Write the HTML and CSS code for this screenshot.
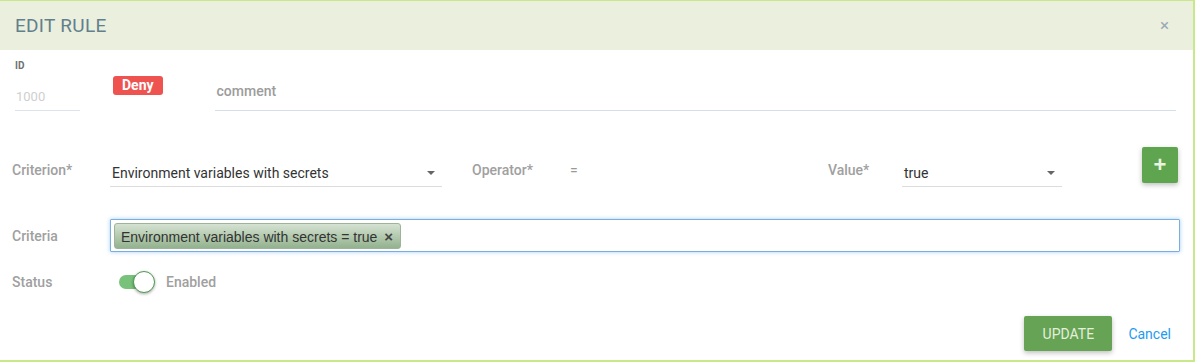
FILE: index.html
```html
<!DOCTYPE html>
<html lang="en">
<head>
    <meta charset="UTF-8">
    <title>Edit Rule</title>
    <link rel="stylesheet" href="styles.css">
</head>
<body>
    <div class="modal">
        <header class="modal-header">
            <h1>EDIT RULE</h1>
            <span class="close">&times;</span>
        </header>

        <div class="modal-body">
            <div class="row-top">
                <div class="id-field">
                    <label>ID</label>
                    <div class="id-input">1000</div>
                </div>
                <span class="badge-deny">Deny</span>
                <div class="comment-input">comment</div>
            </div>

            <div class="row-criterion">
                <label class="field-label">Criterion*</label>
                <div class="select select-criterion">
                    <span>Environment variables with secrets</span>
                    <span class="caret"></span>
                </div>
                <label class="field-label op-label">Operator*</label>
                <span class="op-value">=</span>
                <label class="field-label value-label">Value*</label>
                <div class="select select-value">
                    <span>true</span>
                    <span class="caret"></span>
                </div>
                <button class="btn-add">+</button>
            </div>

            <div class="row-criteria">
                <label class="field-label">Criteria</label>
                <div class="tags-input">
                    <span class="tag">Environment variables with secrets = true <b>&times;</b></span>
                </div>
            </div>

            <div class="row-status">
                <label class="field-label">Status</label>
                <span class="toggle"><span class="knob"></span></span>
                <span class="toggle-text">Enabled</span>
            </div>

            <div class="row-footer">
                <button class="btn-update">UPDATE</button>
                <a href="#" class="cancel">Cancel</a>
            </div>
        </div>
    </div>
</body>
</html>
```

FILE: styles.css
```css
body {
    margin: 0;
    font-family: 'Roboto', 'Liberation Sans', sans-serif;
    background: #fff;
}

.modal {
    width: 1195px;
    height: 362px;
    box-sizing: border-box;
    border: 2px solid #c8e88a;
    border-left: none;
    border-top-width: 1px;
    background: #fff;
}

.modal-header {
    height: 49px;
    background: #ebefde;
    display: flex;
    align-items: center;
    justify-content: space-between;
    padding: 0 24px 0 15px;
}

.modal-header h1 {
    margin: 0;
    font-size: 19px;
    font-weight: 400;
    color: #62808c;
    letter-spacing: 0.3px;
}

.close {
    color: #9aa8b8;
    font-size: 17px;
    line-height: 1;
}

.modal-body {
    padding: 0 12px 0 12px;
}

.row-top {
    display: flex;
    align-items: flex-start;
    height: 66px;
}

.id-field {
    margin-left: 3px;
    width: 65px;
    padding-top: 10px;
}

.id-field label {
    display: block;
    font-size: 10px;
    font-weight: 700;
    color: #707070;
    height: 14px;
}

.id-input {
    margin-top: 10px;
    font-size: 13px;
    color: #cfcfcf;
    padding: 5px 1px 6px;
    border-bottom: 1px solid #dde3ea;
}

.badge-deny {
    margin-left: 33px;
    margin-top: 26px;
    background: #ef5350;
    color: #fff;
    font-weight: 700;
    font-size: 14px;
    line-height: 19px;
    padding: 0 9px;
    border-radius: 3px;
}

.comment-input {
    margin-left: 52px;
    margin-top: 33px;
    flex: 1;
    margin-right: 5px;
    font-size: 14px;
    font-weight: 500;
    color: #9c9c9c;
    padding: 0 2px 11px;
    border-bottom: 1px solid #d6dfe9;
}

.row-criterion {
    display: flex;
    align-items: flex-start;
    margin-top: 31px;
    height: 40px;
}

.field-label {
    width: 98px;
    flex-shrink: 0;
    font-size: 14px;
    font-weight: 500;
    color: #a0a0a0;
    padding-top: 15px;
    line-height: 16px;
}

.select {
    margin-top: 10px;
    border-bottom: 1px solid #dcdcdc;
    display: flex;
    align-items: center;
    justify-content: space-between;
    padding: 0 7px 0 2px;
    box-sizing: border-box;
    font-size: 14px;
    color: #333;
    height: 30px;
}

.select span:first-child {
    padding-top: 2px;
}

.caret {
    width: 0;
    height: 0;
    border-left: 4px solid transparent;
    border-right: 4px solid transparent;
    border-top: 4px solid #666;
    margin-top: 2px;
}

.select-criterion {
    width: 332px;
}

.op-label {
    margin-left: 30px;
}

.op-value {
    font-size: 14px;
    color: #999;
    padding-top: 15px;
    line-height: 16px;
}

.value-label {
    margin-left: auto;
    width: 74px;
}

.select-value {
    width: 160px;
}

.btn-add {
    margin-left: 80px;
    margin-right: 3px;
    width: 36px;
    height: 36px;
    border: none;
    border-radius: 2px;
    background: #5fa44e;
    color: #e8f5e0;
    font-size: 22px;
    font-weight: 700;
    line-height: 1;
    padding: 0;
    box-shadow: 0 2px 5px rgba(0, 0, 0, 0.25);
    font-family: 'Liberation Sans', sans-serif;
}

.row-criteria {
    display: flex;
    align-items: center;
    margin-top: 32px;
}

.row-criteria .field-label {
    padding-top: 0;
}

.tags-input {
    flex: 1;
    margin-right: 1px;
    height: 33px;
    box-sizing: border-box;
    border: 1px solid #7aaee0;
    border-radius: 1px;
    box-shadow: 0 0 4px rgba(102, 175, 233, 0.6);
    padding: 2px 3px;
    display: flex;
    align-items: center;
}

.tag {
    font-family: 'Liberation Sans', Arial, sans-serif;
    font-size: 14px;
    color: #333;
    height: 26px;
    line-height: 25px;
    box-sizing: border-box;
    padding: 0 7px 0 6px;
    border: 1px solid #9db39a;
    border-radius: 3px;
    background: linear-gradient(#d5e2d2, #93b28e);
}

.tag b {
    margin-left: 3px;
    color: #444;
    font-size: 15px;
}

.row-status {
    display: flex;
    align-items: center;
    margin-top: 18px;
    height: 24px;
}

.row-status .field-label {
    padding-top: 0;
    width: 107px;
}

.toggle {
    position: relative;
    width: 34px;
    height: 14px;
    border-radius: 7px;
    background: #78c27b;
}

.knob {
    position: absolute;
    left: 14px;
    top: -4px;
    width: 20px;
    height: 20px;
    border-radius: 50%;
    background: #fff;
    border: 1px solid #4f9a52;
    box-shadow: 0 1px 3px rgba(0, 0, 0, 0.35);
}

.toggle-text {
    margin-left: 13px;
    font-size: 14px;
    font-weight: 500;
    color: #a0a0a0;
}

.row-footer {
    display: flex;
    justify-content: flex-end;
    align-items: center;
    margin-top: 22px;
    padding-right: 10px;
}

.btn-update {
    width: 88px;
    height: 35px;
    border: none;
    border-radius: 2px;
    background: #66a355;
    color: #e3f0dc;
    font-family: 'Roboto', sans-serif;
    font-size: 14px;
    box-shadow: 0 2px 5px rgba(0, 0, 0, 0.25);
}

.cancel {
    margin-left: 16px;
    color: #1e9bf0;
    font-size: 14px;
    text-decoration: none;
}
```
